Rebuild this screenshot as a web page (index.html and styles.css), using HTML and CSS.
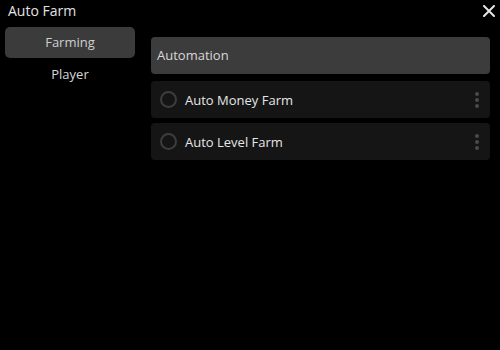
FILE: index.html
```html
<!DOCTYPE html>
<html>
<head>
<meta charset="utf-8">
<link rel="stylesheet" href="styles.css">
</head>
<body>
<div class="window">
  <div class="titlebar">
    <span class="title">Auto Farm</span>
    <svg class="close" width="12" height="12" viewBox="0 0 12 12"><path d="M1 1L11 11M11 1L1 11" stroke="#e6e6e6" stroke-width="2" stroke-linecap="round"/></svg>
  </div>
  <div class="body">
    <div class="sidebar">
      <div class="tab active">Farming</div>
      <div class="tab">Player</div>
    </div>
    <div class="content">
      <div class="section">Automation</div>
      <div class="row">
        <span class="check"></span>
        <span class="label">Auto Money Farm</span>
        <span class="dots"><i></i><i></i><i></i></span>
      </div>
      <div class="row">
        <span class="check"></span>
        <span class="label">Auto Level Farm</span>
        <span class="dots"><i></i><i></i><i></i></span>
      </div>
    </div>
  </div>
</div>
</body>
</html>
```
FILE: styles.css
```css
html, body {
  margin: 0;
  padding: 0;
  background: #000;
  width: 500px;
  height: 350px;
  overflow: hidden;
  font-family: "Open Sans", "Noto Sans", sans-serif;
}
.window {
  width: 500px;
  height: 350px;
  display: flex;
  flex-direction: column;
}
.titlebar {
  height: 22px;
  display: flex;
  align-items: center;
  justify-content: space-between;
  padding: 0 5px 0 8px;
}
.title {
  color: #e2e2e2;
  font-size: 14px;
  line-height: 22px;
}
.close {
  display: block;
}
.body {
  display: flex;
  padding: 5px 10px 0 5px;
  gap: 16px;
}
.sidebar {
  width: 130px;
  display: flex;
  flex-direction: column;
  gap: 1px;
}
.tab {
  height: 31px;
  line-height: 31px;
  text-align: center;
  color: #d6d6d6;
  font-size: 13px;
  border-radius: 5px;
}
.tab.active {
  background: #3b3b3b;
  color: #cfcfcf;
}
.content {
  flex: 1;
  padding-top: 10px;
  display: flex;
  flex-direction: column;
}
.section {
  height: 37px;
  line-height: 37px;
  background: #3c3c3c;
  border-radius: 4px;
  color: #d8d8d8;
  font-size: 13px;
  padding-left: 6px;
  margin-bottom: 7px;
}
.row {
  height: 37px;
  background: #151515;
  border-radius: 4px;
  display: flex;
  align-items: center;
  padding: 0 11px 0 9px;
  margin-bottom: 5px;
}
.check {
  width: 13px;
  height: 13px;
  border: 2px solid #3d3d3d;
  border-radius: 50%;
  margin-right: 8px;
  flex: none;
}
.label {
  flex: 1;
  color: #e6e6e6;
  font-size: 13px;
}
.dots {
  display: flex;
  flex-direction: column;
  gap: 2px;
}
.dots i {
  width: 4px;
  height: 4px;
  background: #4a4a4a;
  border-radius: 50%;
  display: block;
}
```
